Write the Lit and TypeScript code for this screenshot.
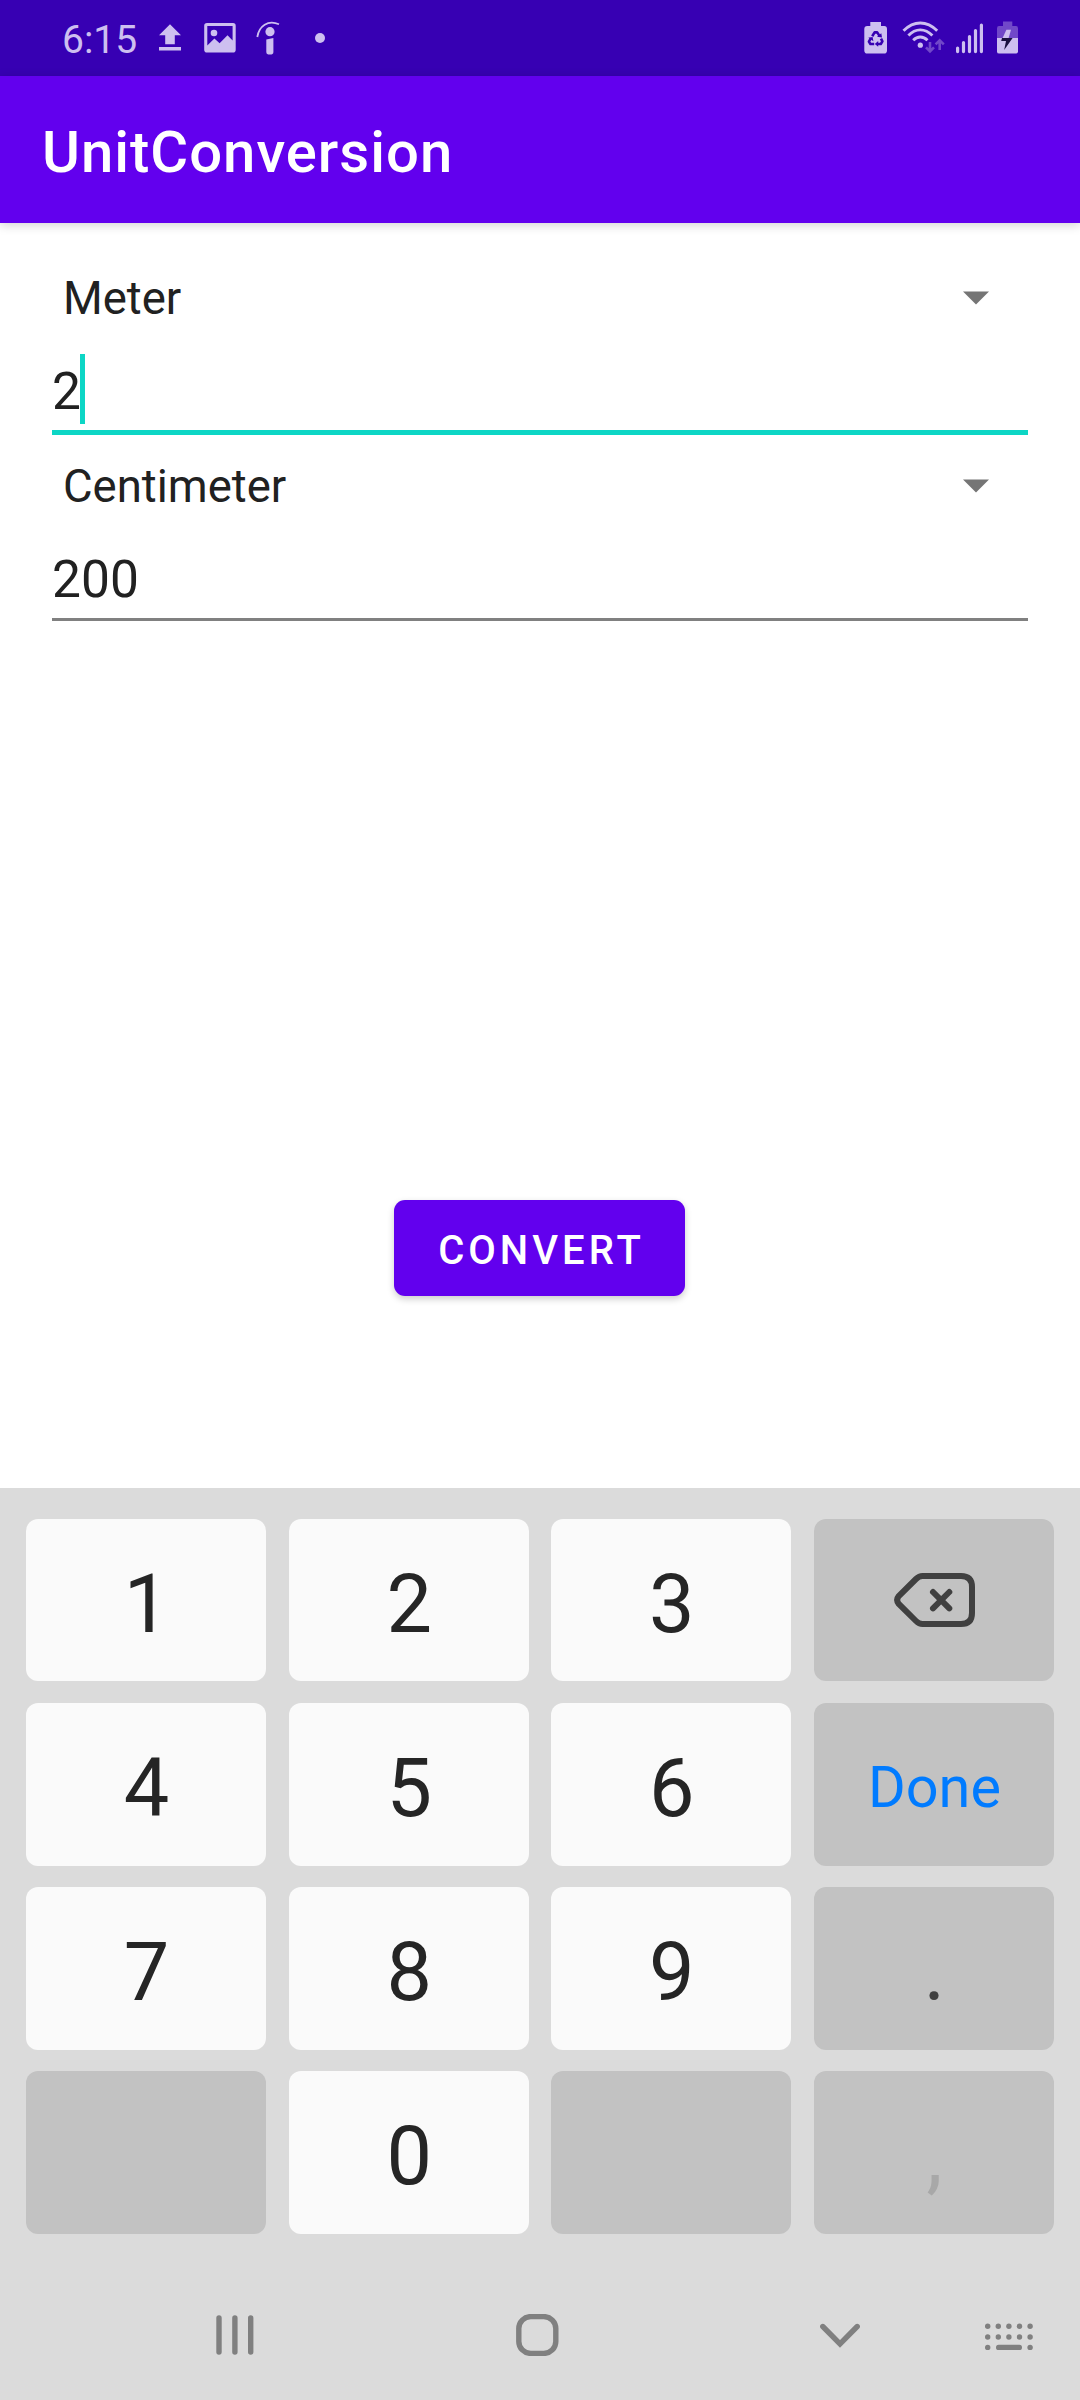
import { LitElement, html, css, svg, nothing } from "lit";
import { customElement, property } from "lit/decorators.js";
import { classMap } from "lit/directives/class-map.js";

@customElement("status-bar")
class StatusBar extends LitElement {
  static styles = css`
    :host {
      display: flex;
      align-items: center;
      justify-content: space-between;
      height: 76px;
      padding: 0 60px 0 62px;
      box-sizing: border-box;
      background: #3700b3;
      color: #cdbff0;
    }
    .side {
      display: flex;
      align-items: center;
      height: 76px;
    }
    .time {
      font-size: 39px;
      line-height: 76px;
      width: 96px;
      padding-top: 3px;
    }
    svg {
      display: block;
      fill: currentColor;
    }
    .line {
      fill: none;
      stroke: currentColor;
    }
    .faint {
      fill: #7148c9;
    }
    .faint-line {
      fill: none;
      stroke: #7148c9;
    }
    .hole {
      fill: #3700b3;
    }
    .bolt-dark {
      fill: #1b1140;
    }
  `;

  render() {
    return html`
      <div class="side">
        <span class="time">6:15</span>
        <svg width="180" height="76" viewBox="158 0 180 76">
          <path d="M170 24.3 L181 35.3 H174.8 V44.3 H165.2 V35.3 H159 Z M159 47 H181 V50.6 H159 Z" />
          <path
            fill-rule="evenodd"
            d="M207 23 H233 Q235.7 23 235.7 25.8 V49.8 Q235.7 52.6 233 52.6 H207 Q204.2 52.6 204.2 49.8 V25.8 Q204.2 23 207 23 Z M207.3 26 V45.5 L214.4 38.6 L219.6 43.2 L227.5 35.3 L232.6 40.5 V26 Z"
          />
          <circle cx="214" cy="33" r="3.3" />
          <path class="line" stroke-width="1.8" d="M257.3 37 C259 26 268 19.5 279 24.3" />
          <circle cx="270" cy="31.7" r="4.6" />
          <path d="M266.3 39.5 L273.4 38 V52 Q273.4 54.6 269.9 54.6 Q266.3 54.6 266.3 52 Z" />
          <circle cx="320" cy="38" r="5" />
        </svg>
      </div>
      <div class="side">
        <svg width="160" height="76" viewBox="860 0 160 76">
          <path d="M870.3 22 H881 V26 H884.2 Q887 26 887 29 V50.5 Q887 53.6 884 53.6 H867.3 Q864.3 53.6 864.3 50.5 V29 Q864.3 26 867.3 26 H870.3 Z" />
          <g fill="none" stroke="#3700b3" stroke-width="2.6" stroke-linejoin="round">
            <path d="M872.2 36.2 L874.6 32.4 H877.2 L879.8 36.4" />
            <path d="M881 38.6 L882.4 41.4 L880.8 44 H877.2" />
            <path d="M874.2 44 H870.4 L868.9 41.6 L870.9 38.2" />
          </g>
          <path class="hole" d="M877 36.8 L882 37.6 L881.3 33.2 Z M878.2 41 V46.8 L874.8 44 Z M868.2 37.7 L872.6 36.9 L873.4 41.2 Z" />
          <g class="line" stroke-width="2.9">
            <path d="M903.5 30.8 Q911.3 23 920.3 23 Q929.3 23 937.2 30.8" />
            <path d="M908.4 35.6 Q913.8 29.9 920.3 29.9 Q926.8 29.9 932.4 35.6" />
            <path d="M913.2 40.3 Q916.4 37 920.3 37 Q924.2 37 927.5 40.3" />
          </g>
          <circle cx="920.3" cy="45.2" r="2.6" />
          <g class="faint-line" stroke-width="2.6">
            <path d="M930 42 V51 M926 47.4 L930 51.4 L934 47.4 M939.7 50 V41 M935.6 44.4 L939.7 40.4 L943.8 44.4" />
          </g>
          <g class="line" stroke-width="3.2" stroke-linecap="round">
            <path d="M957.6 48 V51.6 M963.5 42.6 V51.6 M969.5 36.6 V51.6 M975.5 30.6 V51.6 M981.4 25 V51.6" />
          </g>
          <path class="faint" d="M1003 21.6 H1012.3 V26 H1016 Q1018 26 1018 28.4 V38 H997 V28.4 Q997 26 999 26 H1003 Z" />
          <path d="M997 38 H1018 V51.4 Q1018 53.6 1015.8 53.6 H999.2 Q997 53.6 997 51.4 Z" />
          <path d="M1006.4 29.7 H1011 L1008.6 38 H1002.6 Z" />
          <path class="bolt-dark" d="M1002 38 H1012.6 L1004.2 50 L1006 41 H1001.2 Z" />
        </svg>
      </div>
    `;
  }
}

@customElement("unit-field")
class UnitField extends LitElement {
  @property() unit = "";
  @property() value = "";
  @property({ type: Boolean }) focused = false;

  static styles = css`
    :host {
      display: block;
      height: 188px;
      color: #212121;
    }
    .spinner {
      display: flex;
      align-items: center;
      justify-content: space-between;
      height: 68px;
      padding: 0 39.5px 0 11px;
      font-size: 45.5px;
      line-height: 69px;
    }
    .arrow {
      display: block;
      fill: #757575;
    }
    .input {
      display: flex;
      align-items: flex-start;
      height: 76px;
      margin-top: 22px;
      font-size: 51.5px;
      line-height: 76px;
      border-bottom: 3px solid #808080;
    }
    .input.active {
      border-bottom: 5px solid #0dd6c5;
    }
    .caret {
      width: 5px;
      height: 70px;
      margin-left: -1px;
      background: #0dd6c5;
    }
  `;

  render() {
    return html`
      <div class="spinner">
        <span>${this.unit}</span>
        <svg class="arrow" width="26" height="14" viewBox="0 0 26 14">
          <path d="M0 .5 H26 L13 13.5 Z" />
        </svg>
      </div>
      <div class=${classMap({ input: true, active: this.focused })}>
        <span>${this.value}</span>
        ${this.focused ? html`<span class="caret"></span>` : nothing}
      </div>
    `;
  }
}

type Key = { label: string; kind: "digit" | "side" | "done" | "muted" | "back" };

const KEYS: Key[] = [
  { label: "1", kind: "digit" },
  { label: "2", kind: "digit" },
  { label: "3", kind: "digit" },
  { label: "", kind: "back" },
  { label: "4", kind: "digit" },
  { label: "5", kind: "digit" },
  { label: "6", kind: "digit" },
  { label: "Done", kind: "done" },
  { label: "7", kind: "digit" },
  { label: "8", kind: "digit" },
  { label: "9", kind: "digit" },
  { label: ".", kind: "side" },
  { label: "", kind: "side" },
  { label: "0", kind: "digit" },
  { label: "", kind: "side" },
  { label: ",", kind: "muted" },
];

@customElement("number-pad")
class NumberPad extends LitElement {
  static styles = css`
    :host {
      display: block;
      padding: 31px 26px 0;
    }
    .grid {
      display: grid;
      grid-template-columns: repeat(4, 240px);
      justify-content: space-between;
      grid-auto-rows: 163px;
      row-gap: 21px;
    }
    .key {
      display: flex;
      align-items: center;
      justify-content: center;
      box-sizing: border-box;
      padding: 8px 0 0 1px;
      border-radius: 12px;
      background: #c2c2c2;
      color: #404040;
      font-size: 81px;
      line-height: 96px;
    }
    .key:nth-child(-n + 4) {
      margin-bottom: 1px;
      padding-top: 9px;
    }
    .digit {
      background: #fafafa;
      color: #252525;
    }
    .done {
      padding-top: 6px;
      font-size: 57.6px;
      color: #007bff;
    }
    .muted {
      color: #a8a8a8;
    }
    .key.back {
      padding: 0 0 1px 2px;
    }
    .back-icon {
      display: block;
      fill: none;
      stroke: #404040;
      stroke-width: 6;
      stroke-linecap: round;
    }
  `;

  render() {
    return html`
      <div class="grid">
        ${KEYS.map(
          (key) => html`<div class="key ${key.kind}">
            ${key.kind === "back"
              ? html`<svg class="back-icon" width="81" height="54" viewBox="0 0 81 54">
                  <path
                    d="M28.5 3 H67 Q78 3 78 14 V40 Q78 51 67 51 H28.5 Q25 51 22 48 L4.8 31 Q1.5 27 4.8 23 L22 6 Q25 3 28.5 3 Z"
                  />
                  <path d="M39 19 L55.3 35.3 M55.3 19 L39 35.3" />
                </svg>`
              : key.label}
          </div>`
        )}
      </div>
    `;
  }
}

@customElement("nav-bar")
class NavBar extends LitElement {
  static styles = css`
    :host {
      display: flex;
      align-items: center;
      height: 130px;
      padding: 0 47px 0 216px;
      box-sizing: border-box;
    }
    svg {
      display: block;
      fill: none;
      stroke: #808080;
      stroke-width: 5.4;
      stroke-linecap: round;
    }
    .home {
      margin-left: 261.5px;
    }
    .down {
      margin-left: 261px;
    }
    .keyboard {
      margin-left: auto;
      fill: #808080;
      stroke: none;
    }
  `;

  render() {
    return html`
      <svg width="38" height="42" viewBox="0 0 38 42">
        <path d="M3 4 V38 M18.9 4 V38 M34.7 4 V38" />
      </svg>
      <svg class="home" width="43" height="42" viewBox="0 0 43 42">
        <rect x="2.8" y="2.6" width="37" height="36.8" rx="12" />
      </svg>
      <svg class="down" width="40" height="42" viewBox="0 0 40 42">
        <path d="M2.8 12.5 L20 29.8 L37.2 12.5" />
      </svg>
      <svg class="keyboard" width="48" height="42" viewBox="0 0 48 42">
        ${[0, 1, 2, 3, 4].map(
          (i) => svg`
            <circle cx=${2.7 + i * 10.6} cy="12.3" r="2.7" />
            <circle cx=${2.7 + i * 10.6} cy="23" r="2.7" />`
        )}
        <circle cx="2.7" cy="33.4" r="2.7" />
        <circle cx="45.1" cy="33.4" r="2.7" />
        <rect x="11" y="30.8" width="26" height="5.2" rx="2.6" />
      </svg>
    `;
  }
}

@customElement("app-root")
class AppRoot extends LitElement {
  static styles = css`
    :host {
      display: flex;
      flex-direction: column;
      width: 1080px;
      height: 2400px;
      background: #fff;
      font-family: Roboto, "Liberation Sans", sans-serif;
      overflow: hidden;
    }
    .app-bar {
      height: 147px;
      box-sizing: border-box;
      padding: 1px 0 0 42px;
      background: #6200ee;
      color: #fff;
      font-size: 58px;
      font-weight: 500;
      letter-spacing: 1px;
      line-height: 150px;
      box-shadow: 0 2px 10px rgba(0, 0, 0, 0.18);
    }
    .content {
      display: flex;
      flex-direction: column;
      height: 1265px;
      box-sizing: border-box;
      padding: 41px 52px 0;
    }
    .convert {
      width: 291px;
      height: 96px;
      margin: 560px 0 0 342px;
      padding: 4px 0 0 4px;
      border: 0;
      border-radius: 11px;
      background: #6200ee;
      color: #fff;
      font: 500 40px Roboto, "Liberation Sans", sans-serif;
      letter-spacing: 4px;
      box-shadow: 0 3px 7px rgba(0, 0, 0, 0.2);
    }
    .keyboard {
      flex: 1;
      display: flex;
      flex-direction: column;
      justify-content: space-between;
      background: #dbdbdb;
    }
  `;

  render() {
    return html`
      <status-bar></status-bar>
      <header class="app-bar">UnitConversion</header>
      <main class="content">
        <unit-field unit="Meter" value="2" focused></unit-field>
        <unit-field unit="Centimeter" value="200"></unit-field>
        <button class="convert">CONVERT</button>
      </main>
      <section class="keyboard">
        <number-pad></number-pad>
        <nav-bar></nav-bar>
      </section>
    `;
  }
}
